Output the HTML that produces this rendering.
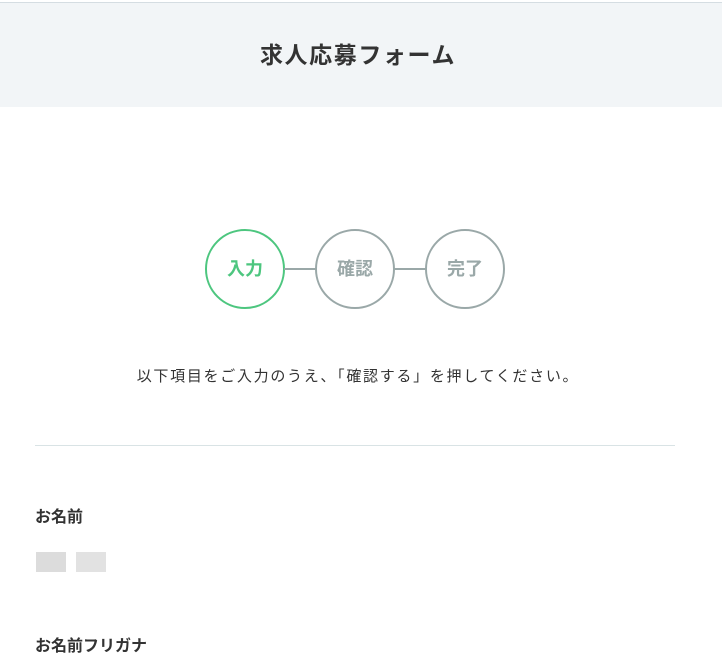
<!DOCTYPE html>
<html><head><meta charset="utf-8"><style>
html,body{margin:0;padding:0;background:#fff;width:722px;height:670px;overflow:hidden;font-family:"Liberation Sans","Noto Sans CJK JP",sans-serif;color:#333}
.hd{position:absolute;left:0;top:2px;width:722px;height:104px;background:#f2f5f7;border-top:1px solid #d5dde2}
.hd h1{margin:0;position:absolute;left:0;right:0;top:37px;text-align:center;font-size:23px;letter-spacing:1.6px;line-height:30px;font-weight:bold;color:#333;padding-right:6px}
.c{position:absolute;top:229px;width:76px;height:76px;border:2px solid #9aa8a8;border-radius:50%;text-align:center;line-height:76px;font-size:18px;font-weight:bold;color:#9aa8a8}
.c.g{border-color:#4dc67f;color:#4dc67f}
.ln{position:absolute;top:268px;height:2px;width:32px;background:#9aa8a8}
.msg{position:absolute;top:366px;left:0;width:722px;text-align:center;font-size:15px;letter-spacing:1.7px;line-height:22px;color:#333;padding-right:6px;box-sizing:border-box}
.hr{position:absolute;left:35px;width:640px;top:445px;height:1px;background:#d9e3e5}
.lb{position:absolute;left:35px;font-size:16px;font-weight:bold;line-height:22px}
.px{position:absolute;background:#ddd}
</style></head><body>
<div class="hd"><h1>求人応募フォーム</h1></div>
<div class="c g" style="left:205px">入力</div>
<div class="ln" style="left:284px"></div>
<div class="c" style="left:315px">確認</div>
<div class="ln" style="left:394px"></div>
<div class="c" style="left:425px">完了</div>
<div class="msg">以下項目をご入力のうえ、「確認する」を押してください。</div>
<div class="hr"></div>
<div class="lb" style="top:507px">お名前</div>
<div class="px" style="left:36px;top:552px;width:30px;height:20px;background:#dcdcdc"></div>
<div class="px" style="left:76px;top:552px;width:30px;height:20px;background:#e2e2e2"></div>
<div class="lb" style="top:636px">お名前フリガナ</div>
</body></html>
